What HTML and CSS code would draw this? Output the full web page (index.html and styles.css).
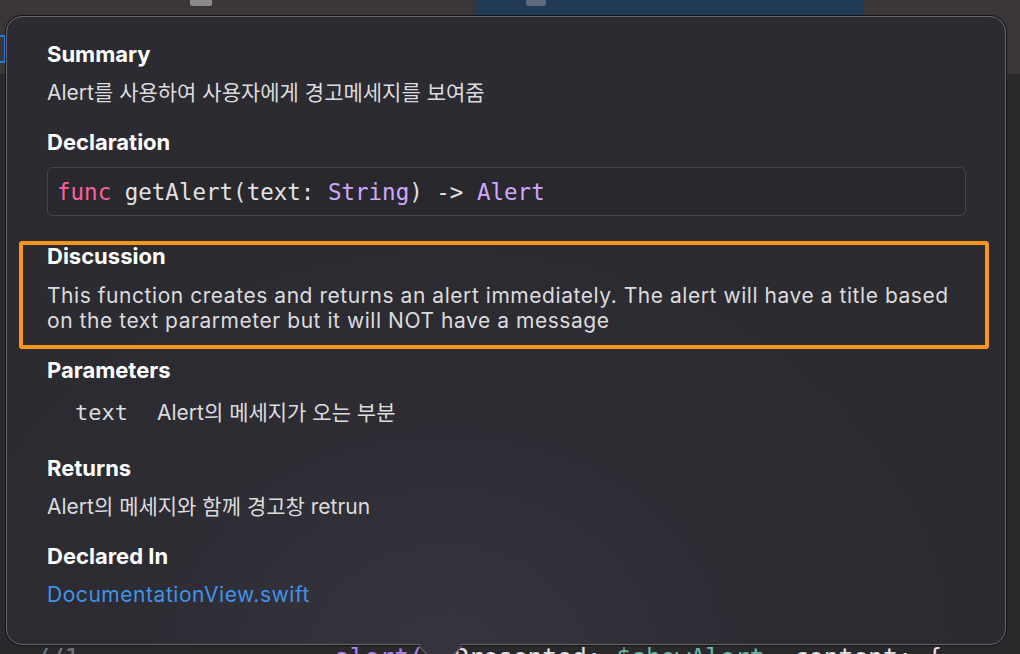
FILE: index.html
```html
<!DOCTYPE html>
<html lang="ko">
<head>
    <meta charset="UTF-8">
    <title>Quick Help</title>
    <link rel="stylesheet" href="styles.css">
</head>
<body>
    <div class="editor">
        <div class="toolbar">
            <span class="tool-mark"></span>
            <div class="tab-active">
                <span class="tool-mark"></span>
            </div>
        </div>
        <div class="editor-body">
            <div class="gutter-mark"></div>
            <div class="popover">
                <section class="help-section">
                    <h2>Summary</h2>
                    <p class="ko">Alert를 사용하여 사용자에게 경고메세지를 보여줌</p>
                </section>
                <section class="help-section">
                    <h2>Declaration</h2>
                    <div class="code-box"><span class="kw">func</span> getAlert(text: <span class="type">String</span>) -&gt; <span class="type">Alert</span></div>
                </section>
                <section class="help-section highlighted">
                    <h2>Discussion</h2>
                    <p>This function creates and returns an alert immediately. The alert will have a title based on the text pararmeter but it will NOT have a message</p>
                </section>
                <section class="help-section">
                    <h2>Parameters</h2>
                    <div class="param-row">
                        <span class="param-name">text</span>
                        <span>Alert의 메세지가 오는 부분</span>
                    </div>
                </section>
                <section class="help-section">
                    <h2>Returns</h2>
                    <p class="ko">Alert의 메세지와 함께 경고창 retrun</p>
                </section>
                <section class="help-section">
                    <h2>Declared In</h2>
                    <p><a class="file-link" href="#">DocumentationView.swift</a></p>
                </section>
            </div>
            <div class="code-line">
                <span class="comment">//1</span>
                <span class="call">alert(</span><span>isPresented: <span class="binding">$showAlert</span>, content: {</span>
            </div>
        </div>
    </div>
</body>
</html>
```

FILE: styles.css
```css
* {
    box-sizing: border-box;
}
html, body {
    margin: 0;
    padding: 0;
    height: 100%;
    overflow: hidden;
}
body {
    background-color: #29292c;
    font-family: Inter, "Noto Sans CJK KR", sans-serif;
    color: #dcdcde;
}
.editor {
    display: flex;
    flex-direction: column;
    height: 100%;
}
.toolbar {
    height: 16px;
    background-color: #3a3637;
    display: flex;
    align-items: flex-start;
    padding-left: 190px;
    gap: 264px;
}
.tool-mark {
    width: 22px;
    height: 6px;
    background-color: #8a8a8c;
    border-radius: 0 0 2px 2px;
}
.tab-active {
    width: 387px;
    height: 16px;
    background-color: #213a55;
    padding-left: 50px;
}
.tab-active .tool-mark {
    display: block;
    width: 20px;
    background-color: #5c6a7c;
}
.editor-body {
    position: relative;
    flex: 1;
    background: linear-gradient(#3a3637 0, #3a3637 58px, #29292c 58px);
}
.gutter-mark {
    position: absolute;
    left: 0;
    top: 19px;
    width: 6px;
    height: 28px;
    border: 2px solid #1b80e4;
    border-left: none;
}
.popover {
    position: relative;
    margin-left: 6px;
    width: 1000px;
    height: 629px;
    padding: 24px 39px 0 40px;
    border-radius: 16px;
    border: 1px solid #66656b;
    box-shadow: 0 0 0 1px #151517;
    background: radial-gradient(ellipse 520px 420px at 440px 640px, #37343f 0%, #2d2c33 60%, #2b2b31 100%);
    display: flex;
    flex-direction: column;
    gap: 24px;
    z-index: 2;
}
.popover::after {
    content: "";
    position: absolute;
    left: 418px;
    bottom: -18px;
    width: 30px;
    height: 30px;
    transform: rotate(45deg);
    background-color: #36333e;
    border-right: 1px solid #66656b;
    border-bottom: 1px solid #66656b;
}
.help-section {
    position: relative;
}
.help-section h2 {
    margin: 0 0 12px 0;
    font-size: 22px;
    line-height: 27px;
    font-weight: 700;
    color: #ffffff;
}
.help-section p {
    margin: 0;
    font-size: 21px;
    line-height: 25px;
    letter-spacing: 0.55px;
    color: #dcdcde;
}
.help-section p.ko {
    letter-spacing: 0;
}
.code-box {
    margin-top: -1px;
    height: 49px;
    border: 1px solid #46464c;
    border-radius: 6px;
    background-color: #28282d;
    padding: 0 9px;
    display: flex;
    align-items: center;
    font-family: "DejaVu Sans Mono", monospace;
    font-size: 22.5px;
    color: #e2e2e4;
    white-space: pre;
}
.kw {
    color: #fc5fa3;
}
.type {
    color: #d0a8ff;
}
.highlighted {
    margin-top: 3px;
}
.highlighted h2 {
    margin-bottom: 13px;
}
.highlighted::before {
    content: "";
    position: absolute;
    left: -28px;
    right: -23px;
    top: -2px;
    bottom: -16px;
    border: 4px solid #f8951d;
    border-radius: 3px;
}
.param-row {
    display: flex;
    gap: 29px;
    margin: 16px 0 6px 28px;
    font-size: 21px;
    line-height: 25px;
    color: #dcdcde;
}
.param-name {
    font-family: "DejaVu Sans Mono", monospace;
    font-size: 22px;
}
.file-link {
    color: #4193ea;
    text-decoration: none;
}
.code-line {
    display: flex;
    align-items: baseline;
    margin-top: -2px;
    font-family: "DejaVu Sans Mono", monospace;
    font-size: 24.6px;
    color: #e2e2e4;
    white-space: pre;
}
.comment {
    color: #6c7986;
    margin-left: 35px;
    width: 300px;
}
.call {
    color: #b281eb;
}
.binding {
    color: #67b7a4;
}
```
